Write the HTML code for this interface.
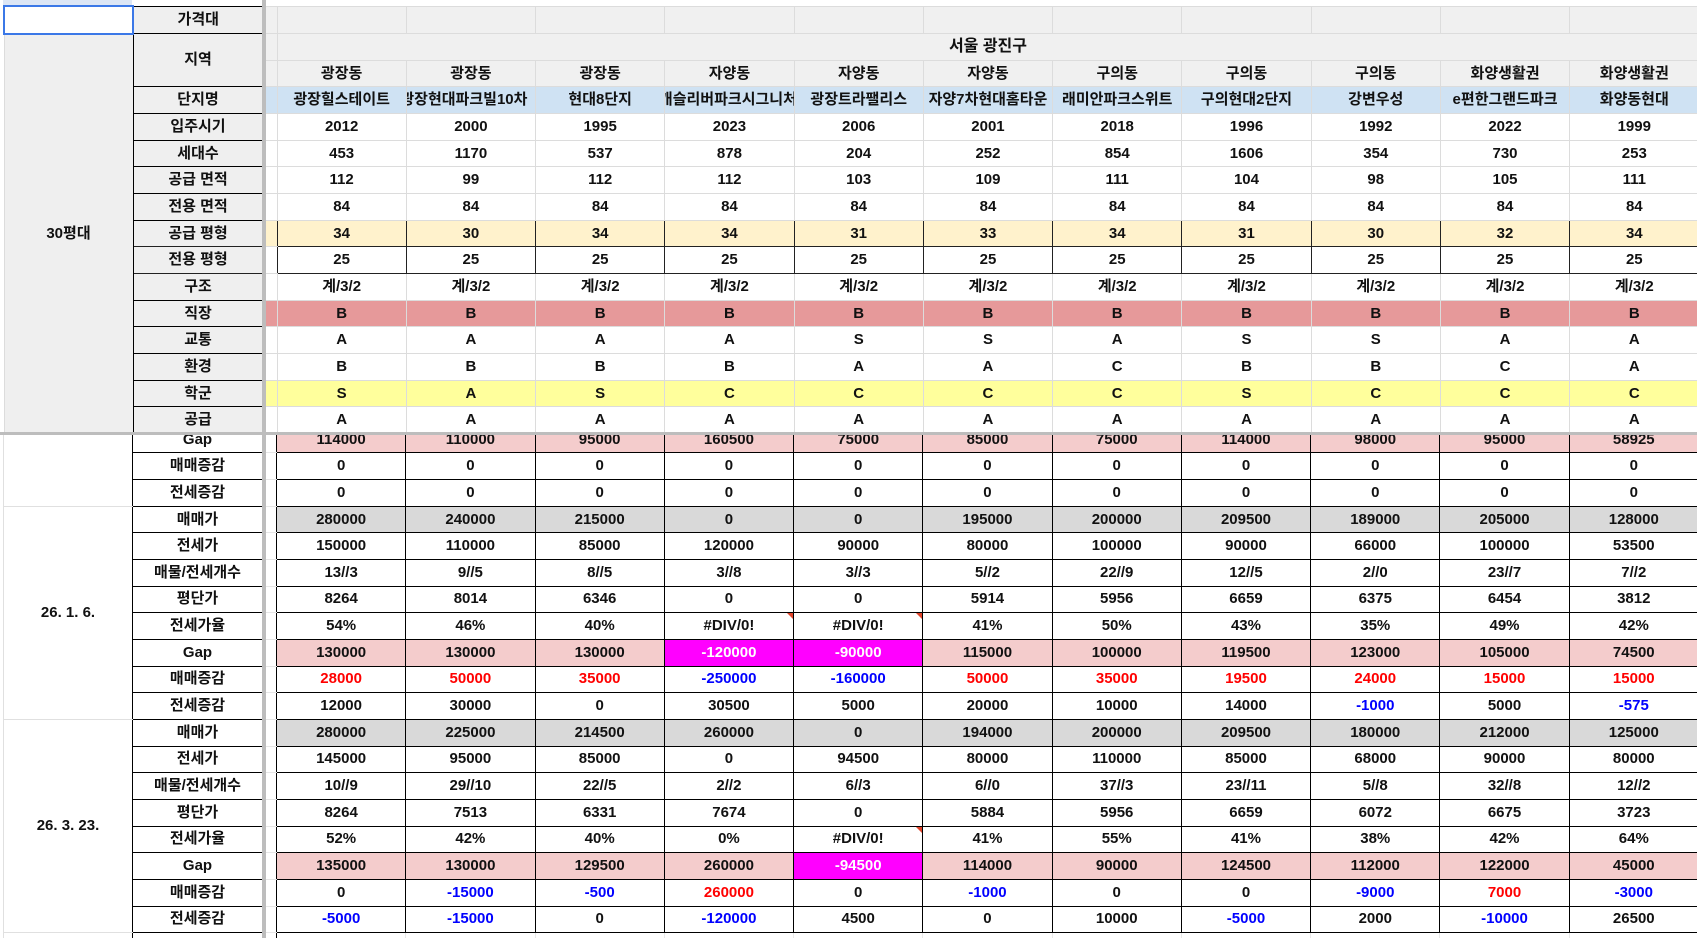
<!DOCTYPE html>
<html><head><meta charset="utf-8">
<style>
html,body{margin:0;padding:0;width:1697px;height:938px;overflow:hidden;background:#fff;}
body{font-family:"Liberation Sans","Noto Sans CJK KR",sans-serif;font-weight:bold;font-size:15px;color:#111;position:relative;}
table{border-collapse:collapse;table-layout:fixed;position:absolute;left:3px;}
td{border:1px solid #dcdcdc;padding:0;text-align:center;white-space:nowrap;overflow:hidden;height:25.67px;line-height:24px;}
.b{border:1px solid #000;background:#efefef;}
.bw{border:1px solid #000;background:#fff;}
.g{background:#f0f0f0;}
.dk td{border-left-color:#222;border-right-color:#222;border-top-color:#222;border-bottom-color:#222;}
.dk td.sp{border-left-color:#dcdcdc;border-top-color:#dcdcdc;border-bottom-color:#dcdcdc;}
.y1 td{background:#fff2cc;}
.pk td{background:#e6999a;}
.yl td{background:#ffff9c;}
.gp td{background:#f4cccc;}
.mm td{background:#d9d9d9;}
.nm td{background:#cfe2f3;}
tr td.b{background:#efefef;}
tr td.bw{background:#fff;}
tr td.ca{background:#efefef;}
tr td.cw{background:#fff;}
.r{color:#ff0000;}.u{color:#0000ff;}
td.m{background:#ff00ff !important;color:#fff;}
.tri{position:relative;}
.tri:after{content:"";position:absolute;right:0;top:0;border-top:6px solid #e0442a;border-left:6px solid transparent;}
#bot{position:absolute;left:0;top:435px;width:1697px;height:503px;overflow:hidden;}
#bot table{top:-9.3px;left:3px;}
.bot td{border-color:#000;}
.bot td.sp{border-top-color:#e4e4e4;border-bottom-color:#e4e4e4;border-left-color:#e4e4e4;background:#fff;}
.bot td.cw{border:1px solid #e0e0e0;border-right-color:#000;}
.bot td.cw.sep{border-top:1px solid #666;}
</style></head><body>
<div style="position:absolute;left:3px;top:0;width:129px;height:5px;background:#dce6f5"></div>
<table id="top" style="top:5px;width:1695px">
<colgroup><col style="width:129px"><col style="width:130px"><col style="width:14px"><col span="11" style="width:129.27px"></colgroup>
<tr class="g"><td style="border:2px solid #3b78e7;background:#fff"></td><td class="b">가격대</td><td class="g sp"></td><td class="g"></td><td class="g"></td><td class="g"></td><td class="g"></td><td class="g"></td><td class="g"></td><td class="g"></td><td class="g"></td><td class="g"></td><td class="g"></td><td class="g"></td></tr>
<tr><td class="ca" rowspan="15" style="border:1px solid #dcdcdc;border-right-color:#000">30평대</td><td class="b" rowspan="2">지역</td><td class="g sp"></td><td class="g" colspan="11" style="font-size:16px">서울 광진구</td></tr>
<tr><td class="g sp"></td><td class="g">광장동</td><td class="g">광장동</td><td class="g">광장동</td><td class="g">자양동</td><td class="g">자양동</td><td class="g">자양동</td><td class="g">구의동</td><td class="g">구의동</td><td class="g">구의동</td><td class="g">화양생활권</td><td class="g">화양생활권</td></tr>
<tr class="nm"><td class="b">단지명</td><td class="sp"></td><td>광장힐스테이트</td><td style="text-overflow:clip"><span style="margin-left:-14px">광장현대파크빌10차</span></td><td>현대8단지</td><td><span style="margin-left:-34px">롯데캐슬리버파크시그니처</span></td><td>광장트라팰리스</td><td>자양7차현대홈타운</td><td>래미안파크스위트</td><td>구의현대2단지</td><td>강변우성</td><td>e편한그랜드파크</td><td>화양동현대</td></tr>
<tr><td class="b">입주시기</td><td class="sp"></td><td>2012</td><td>2000</td><td>1995</td><td>2023</td><td>2006</td><td>2001</td><td>2018</td><td>1996</td><td>1992</td><td>2022</td><td>1999</td></tr>
<tr><td class="b">세대수</td><td class="sp"></td><td>453</td><td>1170</td><td>537</td><td>878</td><td>204</td><td>252</td><td>854</td><td>1606</td><td>354</td><td>730</td><td>253</td></tr>
<tr><td class="b">공급 면적</td><td class="sp"></td><td>112</td><td>99</td><td>112</td><td>112</td><td>103</td><td>109</td><td>111</td><td>104</td><td>98</td><td>105</td><td>111</td></tr>
<tr><td class="b">전용 면적</td><td class="sp"></td><td>84</td><td>84</td><td>84</td><td>84</td><td>84</td><td>84</td><td>84</td><td>84</td><td>84</td><td>84</td><td>84</td></tr>
<tr class="dk y1"><td class="b">공급 평형</td><td class="sp"></td><td>34</td><td>30</td><td>34</td><td>34</td><td>31</td><td>33</td><td>34</td><td>31</td><td>30</td><td>32</td><td>34</td></tr>
<tr class="dk"><td class="b">전용 평형</td><td class="sp"></td><td>25</td><td>25</td><td>25</td><td>25</td><td>25</td><td>25</td><td>25</td><td>25</td><td>25</td><td>25</td><td>25</td></tr>
<tr><td class="b">구조</td><td class="sp"></td><td>계/3/2</td><td>계/3/2</td><td>계/3/2</td><td>계/3/2</td><td>계/3/2</td><td>계/3/2</td><td>계/3/2</td><td>계/3/2</td><td>계/3/2</td><td>계/3/2</td><td>계/3/2</td></tr>
<tr class="pk"><td class="b">직장</td><td class="sp"></td><td>B</td><td>B</td><td>B</td><td>B</td><td>B</td><td>B</td><td>B</td><td>B</td><td>B</td><td>B</td><td>B</td></tr>
<tr><td class="b">교통</td><td class="sp"></td><td>A</td><td>A</td><td>A</td><td>A</td><td>S</td><td>S</td><td>A</td><td>S</td><td>S</td><td>A</td><td>A</td></tr>
<tr><td class="b">환경</td><td class="sp"></td><td>B</td><td>B</td><td>B</td><td>B</td><td>A</td><td>A</td><td>C</td><td>B</td><td>B</td><td>C</td><td>A</td></tr>
<tr class="yl"><td class="b">학군</td><td class="sp"></td><td>S</td><td>A</td><td>S</td><td>C</td><td>C</td><td>C</td><td>C</td><td>S</td><td>C</td><td>C</td><td>C</td></tr>
<tr><td class="b">공급</td><td class="sp"></td><td>A</td><td>A</td><td>A</td><td>A</td><td>A</td><td>A</td><td>A</td><td>A</td><td>A</td><td>A</td><td>A</td></tr>
</table>
<div id="bot">
<table class="bot" style="width:1695px">
<colgroup><col style="width:129px"><col style="width:130px"><col style="width:14px"><col span="11" style="width:129.27px"></colgroup>
<tr class="gp"><td class="cw" rowspan="3"></td><td class="bw">Gap</td><td class="sp"></td><td>114000</td><td>110000</td><td>95000</td><td>160500</td><td>75000</td><td>85000</td><td>75000</td><td>114000</td><td>98000</td><td>95000</td><td>58925</td></tr>
<tr><td class="bw">매매증감</td><td class="sp"></td><td>0</td><td>0</td><td>0</td><td>0</td><td>0</td><td>0</td><td>0</td><td>0</td><td>0</td><td>0</td><td>0</td></tr>
<tr><td class="bw">전세증감</td><td class="sp"></td><td>0</td><td>0</td><td>0</td><td>0</td><td>0</td><td>0</td><td>0</td><td>0</td><td>0</td><td>0</td><td>0</td></tr>
<tr class="mm"><td class="cw sep" rowspan="8">26. 1. 6.</td><td class="bw">매매가</td><td class="sp"></td><td>280000</td><td>240000</td><td>215000</td><td>0</td><td>0</td><td>195000</td><td>200000</td><td>209500</td><td>189000</td><td>205000</td><td>128000</td></tr>
<tr><td class="bw">전세가</td><td class="sp"></td><td>150000</td><td>110000</td><td>85000</td><td>120000</td><td>90000</td><td>80000</td><td>100000</td><td>90000</td><td>66000</td><td>100000</td><td>53500</td></tr>
<tr><td class="bw">매물/전세개수</td><td class="sp"></td><td>13//3</td><td>9//5</td><td>8//5</td><td>3//8</td><td>3//3</td><td>5//2</td><td>22//9</td><td>12//5</td><td>2//0</td><td>23//7</td><td>7//2</td></tr>
<tr><td class="bw">평단가</td><td class="sp"></td><td>8264</td><td>8014</td><td>6346</td><td>0</td><td>0</td><td>5914</td><td>5956</td><td>6659</td><td>6375</td><td>6454</td><td>3812</td></tr>
<tr><td class="bw">전세가율</td><td class="sp"></td><td>54%</td><td>46%</td><td>40%</td><td class="tri">#DIV/0!</td><td class="tri">#DIV/0!</td><td>41%</td><td>50%</td><td>43%</td><td>35%</td><td>49%</td><td>42%</td></tr>
<tr class="gp"><td class="bw">Gap</td><td class="sp"></td><td>130000</td><td>130000</td><td>130000</td><td class="m">-120000</td><td class="m">-90000</td><td>115000</td><td>100000</td><td>119500</td><td>123000</td><td>105000</td><td>74500</td></tr>
<tr><td class="bw">매매증감</td><td class="sp"></td><td class="r">28000</td><td class="r">50000</td><td class="r">35000</td><td class="u">-250000</td><td class="u">-160000</td><td class="r">50000</td><td class="r">35000</td><td class="r">19500</td><td class="r">24000</td><td class="r">15000</td><td class="r">15000</td></tr>
<tr><td class="bw">전세증감</td><td class="sp"></td><td>12000</td><td>30000</td><td>0</td><td>30500</td><td>5000</td><td>20000</td><td>10000</td><td>14000</td><td class="u">-1000</td><td>5000</td><td class="u">-575</td></tr>
<tr class="mm"><td class="cw sep" rowspan="8">26. 3. 23.</td><td class="bw">매매가</td><td class="sp"></td><td>280000</td><td>225000</td><td>214500</td><td>260000</td><td>0</td><td>194000</td><td>200000</td><td>209500</td><td>180000</td><td>212000</td><td>125000</td></tr>
<tr><td class="bw">전세가</td><td class="sp"></td><td>145000</td><td>95000</td><td>85000</td><td>0</td><td>94500</td><td>80000</td><td>110000</td><td>85000</td><td>68000</td><td>90000</td><td>80000</td></tr>
<tr><td class="bw">매물/전세개수</td><td class="sp"></td><td>10//9</td><td>29//10</td><td>22//5</td><td>2//2</td><td>6//3</td><td>6//0</td><td>37//3</td><td>23//11</td><td>5//8</td><td>32//8</td><td>12//2</td></tr>
<tr><td class="bw">평단가</td><td class="sp"></td><td>8264</td><td>7513</td><td>6331</td><td>7674</td><td>0</td><td>5884</td><td>5956</td><td>6659</td><td>6072</td><td>6675</td><td>3723</td></tr>
<tr><td class="bw">전세가율</td><td class="sp"></td><td>52%</td><td>42%</td><td>40%</td><td>0%</td><td class="tri">#DIV/0!</td><td>41%</td><td>55%</td><td>41%</td><td>38%</td><td>42%</td><td>64%</td></tr>
<tr class="gp"><td class="bw">Gap</td><td class="sp"></td><td>135000</td><td>130000</td><td>129500</td><td>260000</td><td class="m">-94500</td><td>114000</td><td>90000</td><td>124500</td><td>112000</td><td>122000</td><td>45000</td></tr>
<tr><td class="bw">매매증감</td><td class="sp"></td><td>0</td><td class="u">-15000</td><td class="u">-500</td><td class="r">260000</td><td>0</td><td class="u">-1000</td><td>0</td><td>0</td><td class="u">-9000</td><td class="r">7000</td><td class="u">-3000</td></tr>
<tr><td class="bw">전세증감</td><td class="sp"></td><td class="u">-5000</td><td class="u">-15000</td><td>0</td><td class="u">-120000</td><td>4500</td><td>0</td><td>10000</td><td class="u">-5000</td><td>2000</td><td class="u">-10000</td><td>26500</td></tr>
<tr><td class="cw sep"></td><td style="border-color:#e0e0e0;border-top-color:#000"></td><td class="sp"></td><td style="border-color:#e8e8e8;border-top-color:#000"></td><td style="border-color:#e8e8e8;border-top-color:#000"></td><td style="border-color:#e8e8e8;border-top-color:#000"></td><td style="border-color:#e8e8e8;border-top-color:#000"></td><td style="border-color:#e8e8e8;border-top-color:#000"></td><td style="border-color:#e8e8e8;border-top-color:#000"></td><td style="border-color:#e8e8e8;border-top-color:#000"></td><td style="border-color:#e8e8e8;border-top-color:#000"></td><td style="border-color:#e8e8e8;border-top-color:#000"></td><td style="border-color:#e8e8e8;border-top-color:#000"></td><td style="border-color:#e8e8e8;border-top-color:#000"></td></tr>
</table>
</div>
<div style="position:absolute;left:262px;top:0;width:4px;height:938px;background:#bdbdbd"></div>
<div style="position:absolute;left:0;top:432px;width:1697px;height:3px;background:#bdbdbd"></div>
</body></html>
